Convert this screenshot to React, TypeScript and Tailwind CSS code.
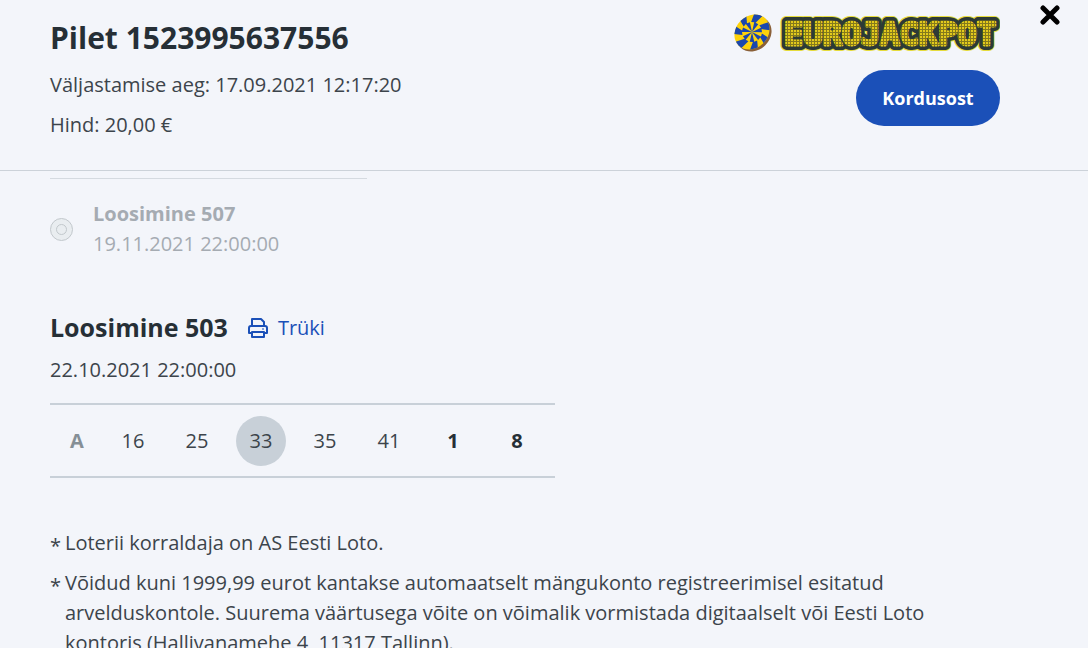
import React, { useState } from 'react';

interface Draw {
  id: number;
  date: string;
}

interface PickedNumber {
  value: number;
  hit?: boolean;
  bonus?: boolean;
}

const upcomingDraw: Draw = { id: 507, date: '19.11.2021 22:00:00' };
const currentDraw: Draw = { id: 503, date: '22.10.2021 22:00:00' };

const numbers: PickedNumber[] = [
  { value: 16 },
  { value: 25 },
  { value: 33, hit: true },
  { value: 35 },
  { value: 41 },
  { value: 1, bonus: true },
  { value: 8, bonus: true },
];

const notes = [
  'Loterii korraldaja on AS Eesti Loto.',
  'Võidud kuni 1999,99 eurot kantakse automaatselt mängukonto registreerimisel esitatud arvelduskontole. Suurema väärtusega võite on võimalik vormistada digitaalselt või Eesti Loto kontoris (Hallivanamehe 4, 11317 Tallinn).',
];

const blades = [0, 51, 103, 154, 206, 257, 309];

// Zigzag edge of a blade as [radius, angle] pairs
const edge = [[0, 0], [10, 10], [10, -8], [22, 6]];

const bladePoints = (start: number) => {
  const point = ([radius, angle]: number[], offset: number) => {
    const rad = ((angle + offset) * Math.PI) / 180;
    return `${18 + radius * Math.cos(rad)},${20 + radius * Math.sin(rad)}`;
  };
  return [
    ...edge.map((p) => point(p, start)),
    ...[...edge].reverse().map((p) => point(p, start + 26)),
  ].join(' ');
};

const Logo: React.FC = () => (
  <svg width="266" height="42" viewBox="0 0 266 42" role="img" aria-label="Eurojackpot">
    <defs>
      <pattern id="led" width="3" height="3" patternUnits="userSpaceOnUse">
        <rect width="3" height="3" fill="#857a1c" />
        <rect width="2" height="2" fill="#e3ca1c" />
      </pattern>
      <clipPath id="ball">
        <ellipse cx="18" cy="20" rx="16" ry="19" transform="rotate(45 18 20)" />
      </clipPath>
    </defs>
    <ellipse cx="20" cy="22" rx="16" ry="19" transform="rotate(45 20 22)" fill="#8a6038" />
    <g clipPath="url(#ball)">
      <rect width="40" height="42" fill="#fdd20a" />
      {blades.map((angle) => (
        <polygon key={angle} points={bladePoints(angle + 16)} fill="#1b47ad" />
      ))}
    </g>
    <g
      fontFamily="DejaVu Sans Mono"
      fontWeight="bold"
      fontSize="32"
      strokeLinejoin="round"
    >
      <text x="50" y="33" fill="#e6dc3c" stroke="#e6dc3c" strokeWidth="12" aria-hidden="true">EUROJACKPOT</text>
      <text x="50" y="33" fill="#2d3a36" stroke="#2d3a36" strokeWidth="10" aria-hidden="true">EUROJACKPOT</text>
      <text x="50" y="33" fill="url(#led)" stroke="url(#led)" strokeWidth="3">EUROJACKPOT</text>
    </g>
  </svg>
);

const PrinterIcon: React.FC = () => (
  <svg width="20" height="20" viewBox="0 0 20 20" fill="none" stroke="currentColor" strokeWidth="2" strokeLinejoin="round">
    <path d="M4 8V1h9l3 3v4" />
    <path d="M4 15H1v-5a2 2 0 0 1 2-2h14a2 2 0 0 1 2 2v5h-3" />
    <path d="M4 14h12v5H4z" />
    <path d="M14 11h2" strokeWidth="1" />
  </svg>
);

const App: React.FC = () => {
  const [open, setOpen] = useState(true);

  if (!open) {
    return null;
  }

  return (
    <div className="relative flex h-screen flex-col bg-[#f3f5fa] font-['Open_Sans',sans-serif] text-[20px] leading-[30px] text-[#3c444b]">
      <button
        type="button"
        aria-label="Sulge"
        onClick={() => setOpen(false)}
        className="absolute top-1 right-7 text-black"
      >
        <svg width="20" height="22" viewBox="0 0 20 22" stroke="currentColor" strokeWidth="5" strokeLinecap="round">
          <path d="M3 4l14 14M17 4L3 18" />
        </svg>
      </button>

      <header className="flex shrink-0 justify-between border-b border-[#ccd2d9] pt-5 pr-[88px] pb-[30px] pl-[50px]">
        <div className="space-y-[10px]">
          <h1 className="pb-1 text-[30px] leading-9 font-bold text-[#262f36]">Pilet 1523995637556</h1>
          <p>Väljastamise aeg: 17.09.2021 12:17:20</p>
          <p>Hind: 20,00 €</p>
        </div>
        <div className="-mt-2 flex flex-col items-end gap-4">
          <Logo />
          <button type="button" className="h-14 w-36 rounded-full bg-[#1b50b8] text-[18px] font-bold text-white">
            Kordusost
          </button>
        </div>
      </header>

      <main className="min-h-0 flex-1 overflow-y-auto pt-[7px] pr-[88px] pl-[50px] [scrollbar-width:none]">
        <label className="flex max-w-[317px] items-center gap-5 border-t border-[#d5dae0] py-5 text-[#a5abb2]">
          <span className="grid place-items-center">
            <input
              type="radio"
              name="draw"
              disabled
              className="col-start-1 row-start-1 size-[23px] appearance-none rounded-full border border-[#c2c8cc] bg-[#e9edf0]"
            />
            <span className="col-start-1 row-start-1 size-[11px] rounded-full border border-[#c2c8cc]" />
          </span>
          <span>
            <span className="block font-bold">Loosimine {upcomingDraw.id}</span>
            <span className="block">{upcomingDraw.date}</span>
          </span>
        </label>

        <section className="pt-[30px]">
          <div className="flex items-center gap-5">
            <h2 className="text-[25px] leading-9 font-bold text-[#262f36]">Loosimine {currentDraw.id}</h2>
            <button type="button" className="flex items-center gap-[10px] pt-0.5 text-[#1b50b8]">
              <PrinterIcon />
              Trüki
            </button>
          </div>
          <p className="pt-[10px]">{currentDraw.date}</p>

          <div className="mt-[18px] max-w-[505px] border-y-2 border-[#c8d0d8] pt-[11px] pb-[10px]">
            <table className="w-[499px] table-fixed border-collapse">
              <tbody>
                <tr>
                  <th scope="row" className="w-[51px] pl-5 text-left font-bold text-[#858f96]">A</th>
                  {numbers.map((number) => (
                    <td key={number.value} className="p-0">
                      <span
                        className={`mx-auto flex size-[50px] items-center justify-center rounded-full ${
                          number.hit ? 'bg-[#c8d0d8]' : ''
                        } ${number.bonus ? 'font-bold text-[#262f36]' : ''}`}
                      >
                        {number.value}
                      </span>
                    </td>
                  ))}
                </tr>
              </tbody>
            </table>
          </div>
        </section>

        <ul className="space-y-[10px] pt-[50px] pb-[50px]">
          {notes.map((note) => (
            <li key={note} className="flex">
              <span className="h-[30px] w-[15px] shrink-0 pt-[3px]">*</span>
              <p>{note}</p>
            </li>
          ))}
        </ul>
      </main>
    </div>
  );
};

export default App;
